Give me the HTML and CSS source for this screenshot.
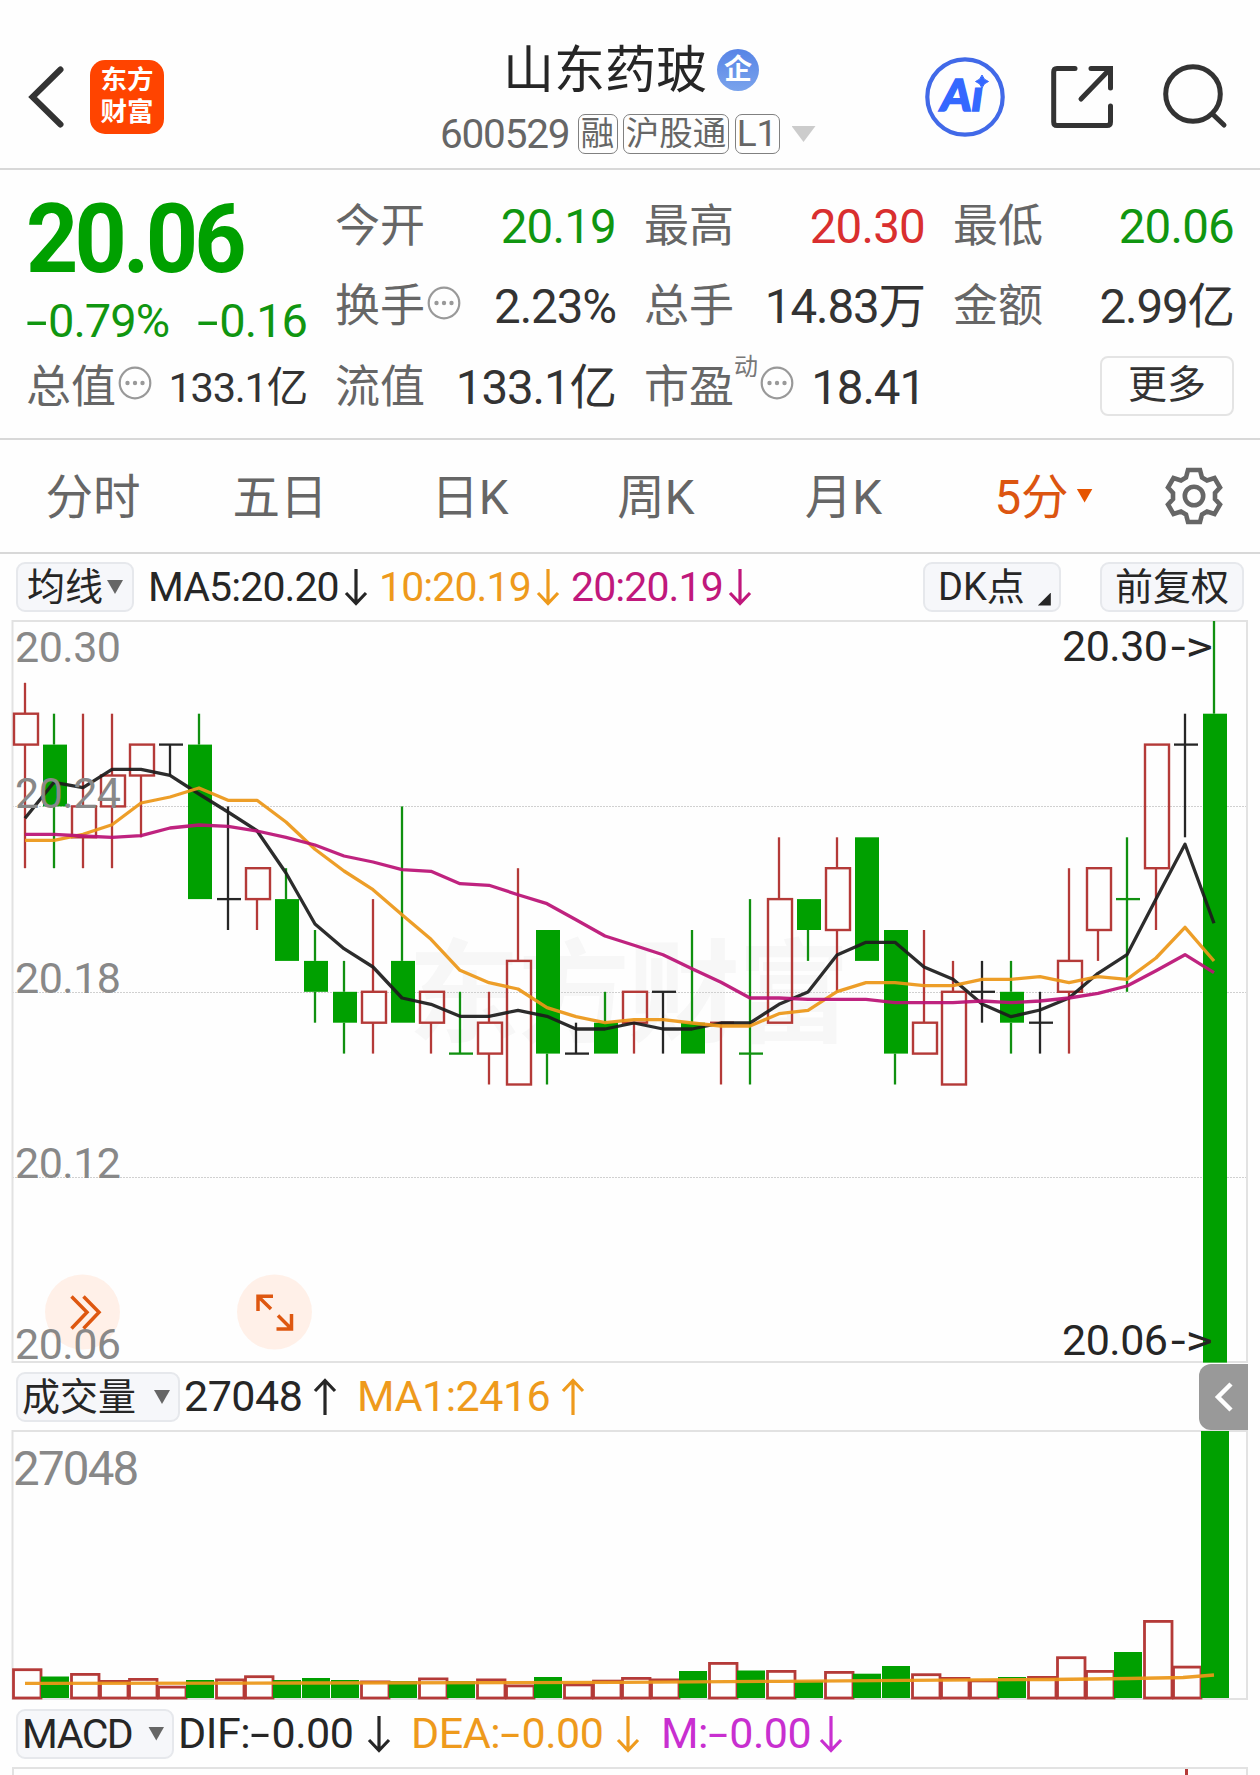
FILE: index.html
```html
<!DOCTYPE html>
<html lang="zh-CN">
<head>
<meta charset="utf-8">
<title>山东药玻 600529</title>
<link rel="stylesheet" href="styles.css">
</head>
<body>
<svg class="defs" width="0" height="0">
  <symbol id="down" viewBox="0 0 24 38"><path d="M12 1V35M2 25L12 35.500L22 25" fill="none" stroke="currentColor" stroke-width="3.200"/></symbol>
  <symbol id="up" viewBox="0 0 24 38"><path d="M12 37V3M2 13L12 2.500L22 13" fill="none" stroke="currentColor" stroke-width="3.200"/></symbol>
  <symbol id="more" viewBox="0 0 34 34"><circle cx="17" cy="17" r="15.300" fill="none" stroke="#999" stroke-width="2.200"/><g fill="#999"><circle cx="9.500" cy="17" r="2.200"/><circle cx="17" cy="17" r="2.200"/><circle cx="24.500" cy="17" r="2.200"/></g></symbol>
</svg>

<header class="top">
  <svg class="back" width="40" height="64" viewBox="0 0 40 64"><path d="M34.500 4.500L6.500 32L34.500 59.500" fill="none" stroke="#333" stroke-width="6" stroke-linecap="round"/></svg>
  <div class="logo"><span>东方</span><span>财富</span></div>
  <div class="title">
    <div class="name">山东药玻<span class="ent">企</span></div>
    <div class="code"><span class="num">600529</span><span class="tag t1">融</span><span class="tag t2">沪股通</span><span class="tag t3">L1</span><i class="tri"></i></div>
  </div>
  <svg class="ai" width="80" height="82" viewBox="925 56 80 82">
    <circle cx="965" cy="97" r="37.700" fill="none" stroke="#4169e8" stroke-width="4.200"/>
    <text class="ai-text" x="939" y="111" transform="translate(15.500 0) skewX(-8)">Aı</text>
    <path d="M982 75Q983.500 80 988.500 81.500Q983.500 83 982 88Q980.500 83 975.500 81.500Q980.500 80 982 75Z" fill="#3468ff" stroke="#3468ff"/>
  </svg>
  <svg class="share" width="64" height="64" viewBox="1050 65 64 64"><path d="M1075 68.500H1057Q1053.700 68.500 1053.700 72V122Q1053.700 125.500 1057 125.500H1107Q1110.500 125.500 1110.500 122V106M1091 68.500H1110.500V88M1109.500 69.500L1081 99" fill="none" stroke="#333" stroke-width="5" stroke-linecap="round"/></svg>
  <svg class="search" width="66" height="66" viewBox="1162 63 66 66"><circle cx="1193" cy="94" r="27.300" fill="none" stroke="#333" stroke-width="5"/><path d="M1213 114.500L1224 125" stroke="#333" stroke-width="5" stroke-linecap="round"/></svg>
</header>

<section class="quote">
  <div class="col c1">
    <div class="price">20.06</div>
    <div class="chg"><span><i class="neg">-</i>0.79%</span><span><i class="neg">-</i>0.16</span></div>
    <div class="cell small"><span class="lab">总值</span><svg class="dots"><use href="#more"/></svg><b>133.1亿</b></div>
  </div>
  <div class="col c2">
    <div class="cell"><span class="lab">今开</span><b class="green">20.19</b></div>
    <div class="cell"><span class="lab">换手</span><svg class="dots"><use href="#more"/></svg><b>2.23%</b></div>
    <div class="cell"><span class="lab">流值</span><b>133.1亿</b></div>
  </div>
  <div class="col c3">
    <div class="cell"><span class="lab">最高</span><b class="red">20.30</b></div>
    <div class="cell"><span class="lab">总手</span><b>14.83万</b></div>
    <div class="cell"><span class="lab">市盈</span><sup>动</sup><svg class="dots"><use href="#more"/></svg><b>18.41</b></div>
  </div>
  <div class="col c4">
    <div class="cell"><span class="lab">最低</span><b class="green">20.06</b></div>
    <div class="cell"><span class="lab">金额</span><b>2.99亿</b></div>
    <div class="cell"><span class="more">更多</span></div>
  </div>
</section>

<nav class="tabs">
  <span>分时</span><span>五日</span><span>日K</span><span>周K</span><span>月K</span>
  <span class="on">5分<i class="tri"></i></span>
  <span class="gear"><svg width="58" height="58" viewBox="-29 -29 58 58" fill="none" stroke="#666" stroke-width="4.600"><path d="M-6 -26H6L8 -18.500L13 -15.500L20.500 -18L26 -8.500L21 -3V3L26 8.500L20.500 18L13 15.500L8 18.500L6 26H-6L-8 18.500L-13 15.500L-20.500 18L-26 8.500L-21 3V-3L-26 -8.500L-20.500 -18L-13 -15.500L-8 -18.500Z"/><circle r="9.200"/></svg></span>
</nav>

<div class="bar ma">
  <span class="btn b-ma">均线<i class="tri"></i></span>
  <span class="v m1">MA5:20.20</span><svg class="arr"><use href="#down"/></svg>
  <span class="v m2 orange">10:20.19</span><svg class="arr orange"><use href="#down"/></svg>
  <span class="v m3 purple">20:20.19</span><svg class="arr purple"><use href="#down"/></svg>
  <span class="btn b-dk">DK点<i class="corner"></i></span>
  <span class="btn b-fq">前复权</span>
</div>

<svg class="chart" id="kline" width="1260" height="744" viewBox="0 620 1260 744">
  <text class="mark" x="408" y="1034" textLength="442">东方财富</text>
  <g class="grid"><path d="M12 806.500H1247M12 992.500H1247M12 1177.500H1247"/></g>
  <rect class="frame" x="12.500" y="621" width="1234.500" height="741"/>
  <g id="candles"></g>
  <polyline id="ma5" class="line l5"/>
  <polyline id="ma10" class="line l10"/>
  <polyline id="ma20" class="line l20"/>
  <g class="round"><circle cx="82.500" cy="1312" r="37.500"/><circle cx="274.500" cy="1312" r="37.500"/></g>
  <path class="ico" d="M71.500 1296.500L87 1312.300L71.500 1328.500M83.500 1296.500L99 1312.300L83.500 1328.500M258 1311V1296.200H273M258.500 1296.700L271 1309M291.500 1314V1329H276.500M291 1328.500L278 1315.500"/>
  <g class="axis">
    <text x="15" y="662">20.30</text><text x="15" y="807.500">20.24</text><text x="15" y="992.500">20.18</text><text x="15" y="1178">20.12</text><text x="15" y="1359">20.06</text>
  </g>
  <g class="ends"><text x="1062" y="660.500" textLength="106">20.30</text><text x="1171" y="660.500" textLength="42" lengthAdjust="spacingAndGlyphs">-&gt;</text><text x="1062" y="1354.500" textLength="106">20.06</text><text x="1171" y="1354.500" textLength="42" lengthAdjust="spacingAndGlyphs">-&gt;</text></g>
</svg>

<div class="bar vol">
  <span class="btn b-vol">成交量<i class="tri"></i></span>
  <span class="v v1">27048</span><svg class="arr"><use href="#up"/></svg>
  <span class="v v2 orange">MA1:2416</span><svg class="arr orange"><use href="#up"/></svg>
  <span class="side"><svg width="20" height="32" viewBox="0 0 20 32"><path d="M17 3L4 16L17 29" fill="none" stroke="#fff" stroke-width="4.500"/></svg></span>
</div>

<svg class="chart" id="volume" width="1260" height="270" viewBox="0 1430 1260 270">
  <rect class="frame" x="12.500" y="1431" width="1234.500" height="268"/>
  <g id="bars"></g>
  <polyline class="line l10" points="25,1683.300 300,1683 620,1682.300 780,1681.300 906,1680.300 1050,1679.500 1130,1678.500 1183,1677.500 1214,1675"/>
  <text class="vlab" x="13" y="1485">27048</text>
</svg>

<div class="bar macd">
  <span class="btn b-macd">MACD<i class="tri"></i></span>
  <span class="v d1">DIF:<i class="neg">-</i>0.00</span><svg class="arr"><use href="#down"/></svg>
  <span class="v d2 orange">DEA:<i class="neg">-</i>0.00</span><svg class="arr orange"><use href="#down"/></svg>
  <span class="v d3 violet">M:<i class="neg">-</i>0.00</span><svg class="arr violet"><use href="#down"/></svg>
</div>
<div class="macd-box"><i></i></div>
<script src="chart.js"></script>
</body>
</html>
```
FILE: styles.css
```css
* { box-sizing: border-box; }
body { margin: 0; width: 1260px; height: 1775px; overflow: hidden; background: #fefefe; color: #262626; font-family: Roboto, "Noto Sans CJK SC", sans-serif; }
i { font-style: normal; }
.defs { position: absolute; }
.green { color: #109610 !important; }
.red { color: #d92f2f !important; }
.orange { color: #ee9a1c; }
.purple { color: #c0187c; }
.violet { color: #c82fd0; }
.neg { display: inline-block; transform: scaleX(1.65); margin: 0 6px 0 4px; }
.tri { display: inline-block; width: 16px; height: 14px; background: #666; clip-path: polygon(0 0, 100% 0, 50% 100%); }

.top { height: 170px; border-bottom: 2px solid #d8d8d8; display: flex; align-items: flex-start; }
.back { margin: 65px 0 0 26px; }
.logo { width: 74px; height: 74px; margin: 60px 0 0 24px; border-radius: 15px; background: #ff4400; color: #fff; font-weight: 700; font-size: 26.500px; line-height: 32px; text-align: center; padding-top: 4px; }
.logo span { display: block; }
.title { width: 400px; margin: 33px 0 0 276px; }
.name { display: flex; align-items: center; height: 66px; padding-left: 63px; font-size: 51px; white-space: nowrap; }
.ent { width: 42px; height: 42px; margin: 8px 0 0 10px; border-radius: 50%; background: linear-gradient(#5784e6, #7aa3ec); color: #fff; font-size: 28px; font-weight: 700; line-height: 41px; text-align: center; }
.code { display: flex; align-items: center; height: 62px; color: #666; margin-top: 4px; }
.code .num { width: 137.500px; font-size: 40.500px; letter-spacing: -1.200px; }
.tag { border: 1.500px solid #808080; border-radius: 7px; height: 40px; line-height: 37px; font-size: 33.500px; text-align: center; margin-right: 5.500px; white-space: nowrap; }
.t1 { width: 40px; }
.t2 { width: 106px; }
.t3 { width: 45px; font-size: 37px; margin-right: 12px; line-height: 38px; }
.code .tri { width: 24px; height: 16px; background: #ccc; }
.ai { margin: 56px 0 0 85px; }
.ai-text { font: 900 44px Lato, sans-serif; fill: #3468ff; stroke: #3468ff; stroke-width: 1.500px; }
.share { margin: 65px 0 0 45px; }
.search { margin: 63px 0 0 48px; }

.quote { height: 270px; border-bottom: 2px solid #d8d8d8; display: flex; padding-top: 16.500px; }
.c1 { width: 281px; margin-left: 26px; }
.c2 { width: 281px; margin-left: 28px; }
.c3 { width: 281px; margin-left: 28px; }
.c4 { width: 281px; margin-left: 28px; }
.price { height: 103px; line-height: 104px; font-size: 97px; font-weight: 700; color: #00a000; letter-spacing: -4px; transform: scaleX(.94); transform-origin: 0 0; }
.chg { height: 58px; line-height: 61px; display: flex; justify-content: space-between; font-size: 47px; color: #109610; letter-spacing: -1px; }
.cell { height: 80.500px; display: flex; align-items: center; white-space: nowrap; }
.lab { font-size: 45px; color: #666; line-height: 80px; }
.cell b { margin-left: auto; font-weight: 400; font-size: 47.500px; color: #333; line-height: 80px; letter-spacing: -1.100px; }
.cell .green, .cell .red { letter-spacing: -.800px; }
.small b { font-size: 41.500px; letter-spacing: -1.200px; }
.dots { width: 34px; height: 34px; margin: -9px 0 0 2px; }
.cell sup { font-size: 24px; line-height: 24px; color: #777; margin: -42px 0 0 0; vertical-align: 0; }
.more { width: 134px; height: 60px; margin: -3px 0 0 auto; border: 2px solid #e4e4e4; border-radius: 8px; font-size: 39px; line-height: 54px; text-align: center; color: #333; }

.tabs { height: 114px; border-bottom: 2px solid #d8d8d8; display: grid; grid-template-columns: 186px 188px 192px 180px 195px 205px 96px; align-items: center; font-size: 47.500px; color: #666; }
.tabs span { display: flex; justify-content: center; align-items: center; margin-top: -5px; }
.tabs .gear { margin-top: 0; }
.tabs .on { color: #dc5510; }
.on .tri { margin: 4px 0 0 8px; background: #e65500; }

.bar { display: flex; align-items: center; white-space: nowrap; padding-left: 16px; }
.ma { height: 66px; }
.btn { display: flex; align-items: center; height: 50px; border: 2px solid #e6e8ec; border-radius: 9px; background: #f6f7fa; font-size: 38px; line-height: 44px; flex: none; }
.v { font-size: 41px; line-height: 46px; letter-spacing: -0.900px; flex: none; }
.arr { width: 24px; height: 38px; flex: none; }
.b-ma { width: 118px; padding-left: 9px; }
.b-ma .tri { margin-left: 4px; }
.m1 { width: 196px; margin-left: 14px; }
.m2 { width: 157px; margin-left: 11px; }
.m3 { width: 157px; margin-left: 11px; }
.ma .arr { margin-left: 0; }
.b-dk { width: 138px; margin-left: 171px; padding-left: 13px; }
.corner { width: 13px; height: 13px; margin: 24px 0 0 13px; background: #262626; clip-path: polygon(100% 0, 100% 100%, 0 100%); }
.b-fq { width: 144px; margin-left: 39px; justify-content: center; }

.chart { display: block; overflow: visible; }
.frame { fill: none; stroke: #e2e2e2; stroke-width: 2; }
.grid path { stroke: #d0d0d0; stroke-width: 1; stroke-dasharray: 2 1; }
.mark { font: 700 112px "Noto Sans CJK SC", sans-serif; fill: #f7f7f7; }
.line { fill: none; stroke-width: 3.300; stroke-linejoin: round; opacity: .93; }
.l5 { stroke: #1c1c1c; }
.l10 { stroke: #ec9718; }
.l20 { stroke: #ba1275; }
.round circle { fill: #ffede4; opacity: .85; }
.ico { fill: none; stroke: #de5710; stroke-width: 3.500; }
.axis text { font-size: 43px; letter-spacing: -0.500px; fill: #888; }
.ends text { font-size: 43px; fill: #262626; }
.vlab { font-size: 47.500px; letter-spacing: -1.800px; fill: #888; }
.up { fill: none; stroke: #b43a38; stroke-width: 2.400; }
.vup { fill: #fefefe; stroke: #b43a38; stroke-width: 2.800; }
.fall { fill: #00a000; }
.wick-up { stroke: #b43a38; stroke-width: 2.300; }
.wick-fall { stroke: #109010; stroke-width: 2.300; }
.wick-flat { stroke: #262626; stroke-width: 2.300; }

.vol { height: 66px; }
.b-vol { width: 164px; padding-left: 4px; }
.b-vol .tri { margin-left: 18px; }
.vol .v, .macd .v { font-size: 43px; line-height: 44px; margin-top: -2px; letter-spacing: -.500px; }
.v1 { width: 129px; margin-left: 4px; }
.v2 { width: 204px; margin-left: 20px; }
.side { width: 49px; height: 66px; margin-left: 614px; border-radius: 12px 0 0 12px; background: #999; display: flex; align-items: center; justify-content: center; flex: none; }
.macd { height: 67px; }
.b-macd { width: 158px; padding-left: 4px; font-size: 41px; letter-spacing: -1.500px; }
.b-macd .tri { margin-left: 16px; }
.d1 { width: 189px; margin-left: 4px; }
.d2 { width: 205px; margin-left: 20px; }
.d3 { width: 158px; margin-left: 21px; }
.macd-box { width: 1236px; height: 10px; margin-left: 12px; border: 2px solid #e2e2e2; border-bottom: 0; }
.macd-box i { display: block; width: 3px; height: 8px; margin-left: 1171px; background: #b43a38; }
```
FILE: chart.js
```js
// Candles: [kind, body top, body bottom, high, low] in cents above 20.00
const candles = [
  ['u',27,26,28,22],['d',26,24,27,22],['u',24,23,27,22],['u',25,24,27,22],['u',26,25,26,23],['f',26,26,26,25],
  ['d',26,21,27,21],['f',21,21,24,20],['u',22,21,22,20],['d',21,19,22,19],['d',19,18,20,17],['d',18,17,19,16],
  ['u',18,17,21,16],['d',19,17,24,17],['u',18,17,18,16],['d',16,16,18,16],['u',17,16,18,15],['u',19,15,22,15],
  ['d',20,16,20,15],['f',16,16,17,16],['d',17,16,18,16],['u',18,17,18,16],['f',18,18,18,16],['d',17,16,20,16],
  ['u',17,17,17,15],['d',16,16,21,15],['u',21,17,23,17],['d',21,20,21,19],['u',22,20,23,18],['d',23,19,23,19],
  ['d',20,16,20,15],['u',17,16,20,16],['u',18,15,19,15],['f',18,18,19,17],['d',18,17,19,16],['f',17,17,18,16],
  ['u',19,18,22,16],['u',22,20,22,19],['d',21,21,23,18],['u',26,22,26,20],['f',26,26,27,23],['d',27,6,30,6]
];
const ma5 = [818.3,782.3,787.7,769.3,769.3,775.3,794,812,830.7,873,924,948.7,967,998,1004.3,1016.3,1016.3,1010.3,1016.3,1029,1029,1023,1029,1029,1023,1023,1004.3,992,955,942.3,942.3,967,979.3,1004,1016.7,1010,998,973.3,954.7,899,844.3,923.3];
const ma10 = [840.3,840.3,834.3,824.7,803,797,788,800.3,800.3,822,849.3,871,889.7,914.7,939.3,970.3,982.7,989,1007.7,1016.7,1022.7,1019.7,1019.7,1023,1026,1026,1013.7,1010.3,991.7,982.7,982.7,985.7,985.7,979.3,979.3,976.7,982.7,976.7,979.3,958,927.3,961];
const ma20 = [834.3,834.3,836,837.3,835.7,828,825,826.3,831,837.3,845,856,862,869.7,871.3,883.7,885.3,894.7,903.7,919.7,936,945.3,954.7,968.7,982.3,998,998,999.3,999.3,999.3,1002.7,1002.7,1002.7,1001,1002.7,1001,998,993.3,986,970.7,954.7,972.7];
// Volume bar tops, and the direction of each bar
const tops = [1668.3,1676.5,1673,1680,1678,1685.7,1680,1678.5,1675.3,1680,1678,1680,1680.5,1681,1677.5,1681,1678.5,1684.5,1677,1683.5,1679.7,1677,1678.5,1671,1662,1670.5,1670,1681,1671,1673.7,1666,1673.3,1677,1679.5,1677,1676,1656.3,1670,1652,1620,1665.7,1431];
const dirs = 'uduuuuduudddudud' + 'uuduuuududu' + 'duddu' + 'uuduuuduud';

const x = i => 25 + 29 * i;
const y = p => 621 + (30 - p) * 30.9;
const wick = { u: 'wick-up', d: 'wick-fall', f: 'wick-flat' };
const seg = (c, x1, y1, x2, y2) => `<line class="${c}" x1="${x1}" y1="${y1}" x2="${x2}" y2="${y2}"/>`;

let out = '';
candles.forEach(([k, a, b, h, l], i) => {
  const cx = x(i);
  if (h > a) out += seg(wick[k], cx, y(h), cx, y(a));
  if (l < b) out += seg(wick[k], cx, y(b), cx, y(l));
  if (a === b) out += seg(wick[k], cx - 11, y(a), cx + 13, y(a));
  else if (k === 'd') out += `<rect class="fall" x="${cx - 11}" y="${y(a)}" width="24" height="${y(b) - y(a)}"/>`;
  else out += `<rect class="up" x="${cx - 11}" y="${y(a)}" width="24" height="${y(b) - y(a)}"/>`;
});
document.getElementById('candles').innerHTML = out;

[['ma5', ma5], ['ma10', ma10], ['ma20', ma20]].forEach(([id, v]) =>
  document.getElementById(id).setAttribute('points', v.map((p, i) => x(i) + ',' + p).join(' ')));

out = '';
tops.forEach((t, i) => {
  const cx = x(i);
  out += dirs[i] === 'd'
    ? `<rect class="fall" x="${cx - 13}" y="${t}" width="28" height="${1698 - t}"/>`
    : `<rect class="vup" x="${cx - 11.5}" y="${t + 1.4}" width="27.500" height="${1696.600 - t}"/>`;
});
document.getElementById('bars').innerHTML = out;
```
